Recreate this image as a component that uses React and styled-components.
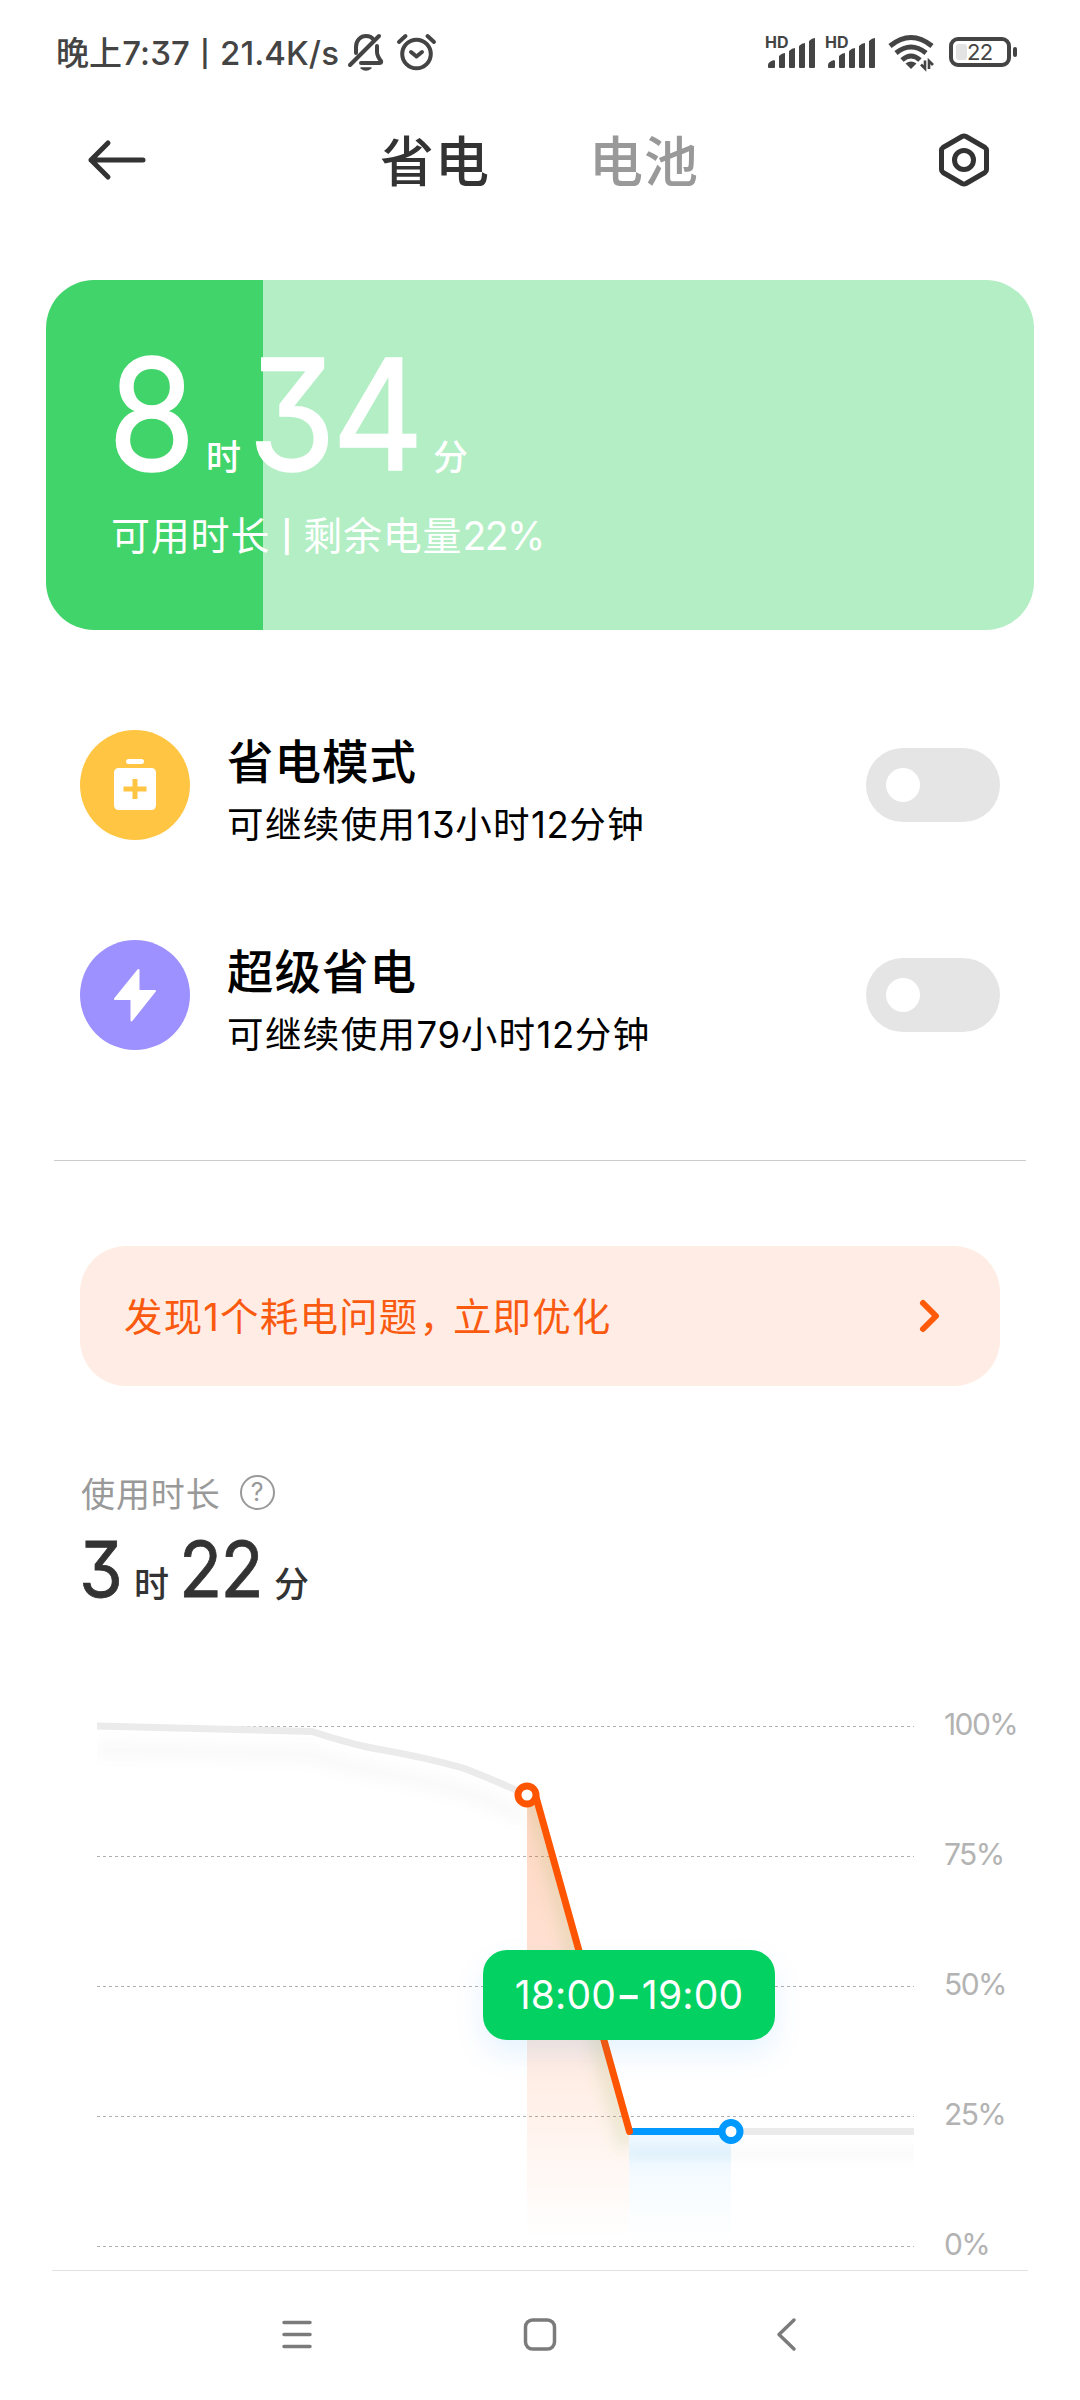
import React from "react";
import styled, { createGlobalStyle } from "styled-components";

const GlobalStyle = createGlobalStyle`
  * { box-sizing: border-box; }
  body { margin: 0; background: #fff; }
`;

const Screen = styled.main`
  width: 1080px;
  height: 2400px;
  overflow: hidden;
  display: flex;
  flex-direction: column;
  background: #fff;
  color: #333;
  font-family: Inter, "Noto Sans CJK SC", sans-serif;
  font-feature-settings: "cv09" 1;
  white-space: nowrap;
  svg { display: block; flex: none; overflow: visible; }
`;

/* Vertical rule between two pieces of text */
const Bar = styled.span`
  display: inline-block;
  width: ${(p) => p.$width}px;
  font-size: ${(p) => p.$size}px;
  font-weight: 600;
  line-height: 1;
  letter-spacing: 0;
  text-align: center;
  vertical-align: ${(p) => p.$raise}px;
`;

/* Status bar */
const StatusBar = styled.header`
  height: 104px;
  padding: 0 63px 0 56px;
  display: flex;
  align-items: center;
  justify-content: space-between;
  color: #444;
`;
const StatusGroup = styled.div`
  display: flex;
  align-items: center;
  gap: ${(p) => p.$gap}px;
`;
const Clock = styled.span`
  width: 281px;
  padding-top: 2px;
  font-size: 33px;
  font-weight: 500;
  line-height: 40px;
  letter-spacing: 0.1px;
`;
const SignalBox = styled.div`
  width: 50px;
  height: 34px;
  position: relative;
`;
const Hd = styled.span`
  position: absolute;
  left: -1px;
  top: 0;
  font-size: 16px;
  font-weight: 700;
  line-height: 14px;
`;
const WifiBox = styled.div`
  margin: 0 5px 0 2px;
`;
const BatteryBody = styled.div`
  width: 62px;
  height: 30px;
  border: 4px solid #444;
  border-radius: 9px;
  display: flex;
  align-items: center;
  padding-left: 3px;
`;
const BatteryLevel = styled.i`
  width: 11px;
  height: 16px;
  border-radius: 3px;
  background: #e3e3e3;
`;
const BatteryText = styled.span`
  font-size: 22px;
  line-height: 22px;
  letter-spacing: -0.6px;
`;
const BatteryNub = styled.i`
  width: 4px;
  height: 10px;
  border-radius: 2px;
  background: #444;
`;

/* Title bar */
const TitleBar = styled.nav`
  height: 112px;
  padding: 0 90px 0 87px;
  display: flex;
  align-items: center;
  justify-content: space-between;
`;
const Tabs = styled.div`
  display: flex;
  gap: 99px;
  margin: 5px 4px 0 0;
`;
const Tab = styled.span`
  font-size: 54px;
  line-height: 80px;
  font-weight: 500;
  letter-spacing: 1px;
  color: ${(p) => (p.$active ? "#333" : "#999")};
`;

/* Remaining time card */
const Hero = styled.section`
  margin: 64px 46px 0;
  height: 350px;
  flex: none;
  padding: 62px 0 0 62px;
  border-radius: 48px;
  color: #fff;
  background: linear-gradient(to right, #41d46a ${(p) => p.$level}%, #b3eec5 ${(p) => p.$level}%);
`;
const Duration = styled.div`
  display: flex;
  align-items: baseline;
  height: ${(p) => p.$height}px;
  line-height: ${(p) => p.$height}px;
`;
const Digits = styled.span`
  width: ${(p) => p.$width}px;
  font-size: ${(p) => p.$size}px;
  font-weight: 400;
  letter-spacing: -0.025em;
  -webkit-text-stroke: 0.01em currentColor;
  transform: scaleX(0.92);
  transform-origin: left;
`;
const Unit = styled.span`
  width: ${(p) => p.$width}px;
  font-size: 35px;
  font-weight: 500;
`;
const HeroNote = styled.div`
  margin: 23px 0 0 3px;
  font-size: 39px;
  line-height: 54px;
  letter-spacing: 0.8px;
`;
const Num = styled.span`
  letter-spacing: ${(p) => p.$spacing}px;
`;

/* Power modes */
const Modes = styled.section`
  margin: 100px 80px 0;
  display: flex;
  flex-direction: column;
  gap: 100px;
`;
const ModeRow = styled.div`
  height: 110px;
  display: flex;
  align-items: center;
  color: #000;
`;
const ModeIcon = styled.div`
  width: 110px;
  height: 110px;
  border-radius: 50%;
  background: ${(p) => p.$color};
`;
const ModeText = styled.div`
  flex: 1;
  margin-left: 37px;
  padding-top: 12px;
  display: flex;
  flex-direction: column;
`;
const ModeTitle = styled.div`
  font-size: 46.5px;
  font-weight: 500;
  line-height: 68px;
  letter-spacing: 1px;
`;
const ModeSub = styled.div`
  font-size: 36.5px;
  line-height: 59px;
  letter-spacing: 1.4px;
`;
const Toggle = styled.button`
  width: 134px;
  height: 74px;
  border: 0;
  border-radius: 37px;
  padding: 0 20px;
  background: #e5e5e5;
  display: flex;
  align-items: center;
`;
const Knob = styled.i`
  width: 34px;
  height: 34px;
  border-radius: 50%;
  background: #fff;
`;
const Divider = styled.hr`
  width: 972px;
  height: 1px;
  flex: none;
  border: 0;
  margin: 110px auto 0;
  background: #ccc;
`;

const Banner = styled.section`
  margin: 85px 80px 0;
  height: 140px;
  flex: none;
  padding: 0 59px 0 44px;
  border-radius: 46px;
  background: #ffede5;
  color: #fa5a10;
  display: flex;
  align-items: center;
  justify-content: space-between;
  font-size: 38.5px;
  letter-spacing: 1.15px;
`;
const BannerText = styled.span`
  margin-bottom: 4px;
`;
const Comma = styled.span`
  margin-left: 1px;
  letter-spacing: -5px;
`;

/* Usage */
const UsageHead = styled.div`
  margin: 83px 81px 0;
  height: 46px;
  flex: none;
  display: flex;
  align-items: center;
  gap: 19px;
  color: #999;
  font-size: 34px;
  letter-spacing: 0.9px;
`;
const Help = styled.span`
  width: 35px;
  height: 35px;
  border: 2px solid #999;
  border-radius: 50%;
  text-align: center;
  font-size: 25px;
  line-height: 31px;
  letter-spacing: 0;
`;
const UsageTime = styled.div`
  margin: 19px 79px 0;
  flex: none;
`;

/* Chart */
const Chart = styled.section`
  position: relative;
  margin-top: 96px;
  height: 570px;
  flex: none;
  padding-left: 97px;
  display: flex;
`;
const AxisLabels = styled.div`
  margin: 4px 0 0 30px;
  height: 561px;
  display: flex;
  flex-direction: column;
  justify-content: space-between;
  font-size: 30px;
  line-height: 41px;
  letter-spacing: -1.6px;
  color: #b3b3b3;
`;
const Tooltip = styled.div`
  position: absolute;
  left: 483px;
  top: 250px;
  width: 292px;
  height: 90px;
  border-radius: 24px;
  background: #03d162;
  box-shadow: 0 14px 30px rgba(0, 140, 255, 0.1);
  color: #fff;
  display: flex;
  align-items: center;
  justify-content: center;
  gap: 5px;
  font-size: 39px;
  line-height: 88px;
  letter-spacing: 0.2px;
`;
const Dash = styled.span`
  font-weight: 600;
  transform: scaleX(0.92);
  margin: 0 -2px;
`;

const NavBar = styled.footer`
  height: 129px;
  margin: 0 52px;
  padding: 0 232px 0 230px;
  border-top: 1px solid #e2e2e2;
  display: flex;
  align-items: center;
  justify-content: space-between;
`;
const HomeKey = styled.div`
  margin-right: 8px;
`;

const Signal = () => (
  <SignalBox>
    <Hd>HD</Hd>
    <svg width="50" height="34" fill="#444">
      <path d="M2 32v-2q0-3 6-5l1 1v6q0 1-1 1H3q-1 0-1-1Z" />
      <path d="M13 32V21q3-3 6-3v14q0 1-1 1h-4q-1 0-1-1Z" />
      <path d="M23 32V16q3-3 6-3v19q0 1-1 1h-4q-1 0-1-1Z" />
      <path d="M33 32V11q3-3 6-3v24q0 1-1 1h-4q-1 0-1-1Z" />
      <path d="M43 32V6q3-3 6-3v29q0 1-1 1h-4q-1 0-1-1Z" />
    </svg>
  </SignalBox>
);

const BellOff = () => (
  <svg width="36" height="38" fill="none" stroke="#444" strokeWidth="4" strokeLinecap="round" strokeLinejoin="round">
    <path d="M8 20v-6C8 7 13 3 18 3q5 0 7 3M29 13v6q0 4 4 9 1 2-2 2H13" />
    <path d="M31 3 2 32" />
    <path d="M13 35h10q-5 4-10 0Z" strokeWidth="1.5" fill="#444" />
  </svg>
);

const Alarm = () => (
  <svg width="42" height="38" fill="none" stroke="#444" strokeWidth="4" strokeLinecap="round" strokeLinejoin="round">
    <circle cx="21.5" cy="21" r="14.3" />
    <path d="m16 19 5.5 4.5 5.5-4.5M4 9l6.5-6M39 9l-6.5-6" />
  </svg>
);

const Wifi = () => (
  <svg width="46" height="36" fill="none" stroke="#444" strokeWidth="5">
    <path d="M2 12Q23 -5 44 12M8 19Q23 7 38 19M14 26Q23 18 32 26" />
    <path d="M17.5 29.5q5.5-4 11 0L23 35Z" fill="#444" stroke="none" />
    <path d="M37 26.5v8l-4-4M41 35v-8l4 4" strokeWidth="2.6" />
  </svg>
);

const MODES = [
  {
    color: "#ffc543",
    title: "省电模式",
    hours: "13",
    icon: (
      <svg width="110" height="110" fill="#fff">
        <rect x="46" y="29" width="18" height="5" rx="2.5" />
        <path
          fillRule="evenodd"
          d="M39 38h32q5 0 5 5v32q0 5-5 5H39q-5 0-5-5V43q0-5 5-5Zm13.5 11v7.5h-9v5h9V69h5v-7.5h9v-5h-9V49Z"
        />
      </svg>
    ),
  },
  {
    color: "#9d91ff",
    title: "超级省电",
    hours: "79",
    icon: (
      <svg width="110" height="110" fill="#fff" stroke="#fff" strokeWidth="2" strokeLinejoin="round">
        <path d="M58.5 30 35 59h16.5v21.5L75 51H58.5Z" />
      </svg>
    ),
  },
];

const GRID = [26, 156, 286, 416, 546];
const PAST = "M0 26 215 31.5Q247 42 270 47C290 51 320 55 366 68Q395 79 430 95";

const App = () => (
  <>
    <GlobalStyle />
    <Screen>
      <StatusBar>
        <StatusGroup $gap={11}>
          <Clock>
            晚上7:37
            <Bar $size={26} $width={30} $raise={2}>|</Bar>
            21.4K/s
          </Clock>
          <BellOff />
          <Alarm />
        </StatusGroup>
        <StatusGroup $gap={10}>
          <Signal />
          <Signal />
          <WifiBox>
            <Wifi />
          </WifiBox>
          <StatusGroup $gap={2}>
            <BatteryBody>
              <BatteryLevel />
              <BatteryText>22</BatteryText>
            </BatteryBody>
            <BatteryNub />
          </StatusGroup>
        </StatusGroup>
      </StatusBar>

      <TitleBar>
        <svg width="58" height="40" fill="none" stroke="#333" strokeWidth="5" strokeLinecap="round" strokeLinejoin="round">
          <path d="M56 20H4M21 3 4 20l17 17" />
        </svg>
        <Tabs>
          <Tab $active>省电</Tab>
          <Tab>电池</Tab>
        </Tabs>
        <svg width="52" height="56" fill="none" stroke="#333" strokeWidth="5" strokeLinejoin="round">
          <path d="M24 4.5q2-1 4 0l19 11q1.5 1 1.5 3v19q0 2-1.5 3l-19 11q-2 1-4 0L5 40.5q-1.5-1-1.5-3v-19q0-2 1.5-3Z" />
          <circle cx="26" cy="28" r="9.5" />
        </svg>
      </TitleBar>

      <Hero $level={22}>
        <Duration $height={144}>
          <Digits $size={154} $width={98}>8</Digits>
          <Unit $width={42}>时</Unit>
          <Digits $size={154} $width={185}>34</Digits>
          <Unit $width={40}>分</Unit>
        </Duration>
        <HeroNote>
          可用时长
          <Bar $size={31} $width={33} $raise={2}>|</Bar>
          剩余电量<Num $spacing={-1.5}>22%</Num>
        </HeroNote>
      </Hero>

      <Modes>
        {MODES.map((mode) => (
          <ModeRow key={mode.title}>
            <ModeIcon $color={mode.color}>{mode.icon}</ModeIcon>
            <ModeText>
              <ModeTitle>{mode.title}</ModeTitle>
              <ModeSub>
                可继续使用<Num $spacing={0.6}>{mode.hours}</Num>小时<Num $spacing={0.6}>12</Num>分钟
              </ModeSub>
            </ModeText>
            <Toggle aria-label={mode.title}>
              <Knob />
            </Toggle>
          </ModeRow>
        ))}
      </Modes>

      <Divider />

      <Banner>
        <BannerText>
          发现1个耗电问题<Comma>，</Comma>立即优化
        </BannerText>
        <svg width="22" height="34" fill="none" stroke="#ff5a0a" strokeWidth="6" strokeLinecap="round" strokeLinejoin="round">
          <path d="m4 4 13 13L4 30" />
        </svg>
      </Banner>

      <UsageHead>
        使用时长
        <Help>?</Help>
      </UsageHead>
      <UsageTime>
        <Duration $height={70}>
          <Digits $size={77} $width={55}>3</Digits>
          <Unit $width={45}>时</Unit>
          <Digits $size={77} $width={95}>22</Digits>
          <Unit $width={40}>分</Unit>
        </Duration>
      </UsageTime>

      <Chart>
        <svg width="817" height="570" fill="none">
          <defs>
            <linearGradient id="warm" x1="0" y1="95" x2="0" y2="540" gradientUnits="userSpaceOnUse">
              <stop offset="0" stopColor="#ff5500" stopOpacity="0.24" />
              <stop offset="0.4" stopColor="#ff5500" stopOpacity="0.17" />
              <stop offset="1" stopColor="#ff5500" stopOpacity="0" />
            </linearGradient>
            <linearGradient id="cool" x1="0" y1="431" x2="0" y2="540" gradientUnits="userSpaceOnUse">
              <stop offset="0" stopColor="#0099ff" stopOpacity="0.07" />
              <stop offset="1" stopColor="#0099ff" stopOpacity="0" />
            </linearGradient>
            <filter id="soft" x="-60" y="0" width="700" height="570" filterUnits="userSpaceOnUse">
              <feGaussianBlur stdDeviation="7" />
            </filter>
            <filter id="softLine" x="0" y="400" width="900" height="120" filterUnits="userSpaceOnUse">
              <feGaussianBlur stdDeviation="6" />
            </filter>
            <clipPath id="pastClip"><rect width="430" height="200" /></clipPath>
            <clipPath id="warmClip"><path d="M430 95h9l93 336v115H430Z" /></clipPath>
            <clipPath id="coolClip"><rect x="532" y="431" width="102" height="115" /></clipPath>
            <clipPath id="restClip"><rect x="634" y="431" width="183" height="100" /></clipPath>
          </defs>
          {GRID.map((y) => (
            <path key={y} d={`M0 ${y + 0.5}H817`} stroke="#b0b0b0" strokeDasharray="3 3" />
          ))}
          <g clipPath="url(#pastClip)">
            <path d={PAST} transform="translate(0 23)" stroke="#000" strokeOpacity="0.022" strokeWidth="16" filter="url(#soft)" />
          </g>
          <path d={PAST} stroke="#ebebeb" strokeWidth="7" strokeLinejoin="round" />
          <path d="M430 95h9l93 336v115H430Z" fill="url(#warm)" />
          <g clipPath="url(#warmClip)">
            <path d="M434 90 530 447" stroke="#8fae50" strokeOpacity="0.16" strokeWidth="18" filter="url(#soft)" />
          </g>
          <rect x="532" y="431" width="102" height="115" fill="url(#cool)" />
          <g clipPath="url(#coolClip)">
            <path d="M528 453H660" stroke="#0080d0" strokeOpacity="0.08" strokeWidth="14" filter="url(#softLine)" />
          </g>
          <g clipPath="url(#restClip)">
            <path d="M614 454H840" stroke="#000" strokeOpacity="0.02" strokeWidth="14" filter="url(#softLine)" />
          </g>
          <path d="M634 431.5H817" stroke="#ebebeb" strokeWidth="7" />
          <path d="M532 431.5H634" stroke="#0099ff" strokeWidth="7" />
          <path d="M439 97 532.5 431.5" stroke="#ff5500" strokeWidth="7" strokeLinecap="round" />
          <circle cx="430" cy="95" r="9" fill="#fff" stroke="#ff5500" strokeWidth="7" />
          <circle cx="634" cy="431.5" r="9" fill="#fff" stroke="#0099ff" strokeWidth="7" />
        </svg>
        <AxisLabels>
          <span>100%</span>
          <span>75%</span>
          <span>50%</span>
          <span>25%</span>
          <span>0%</span>
        </AxisLabels>
        <Tooltip>
          <span>18:00</span>
          <Dash>–</Dash>
          <span>19:00</span>
        </Tooltip>
      </Chart>

      <NavBar>
        <svg width="30" height="34" stroke="#7b7b7b" strokeWidth="3.5" strokeLinecap="round">
          <path d="M2 4.5H28M2 16.5H28M2 28.5H28" />
        </svg>
        <HomeKey>
          <svg width="34" height="34" fill="none" stroke="#7b7b7b" strokeWidth="3.5">
            <rect x="2.5" y="2" width="29" height="29" rx="7" />
          </svg>
        </HomeKey>
        <svg width="20" height="34" fill="none" stroke="#7b7b7b" strokeWidth="3.5" strokeLinecap="round" strokeLinejoin="round">
          <path d="M18 2 3 16.5 18 31" />
        </svg>
      </NavBar>
    </Screen>
  </>
);

export default App;
